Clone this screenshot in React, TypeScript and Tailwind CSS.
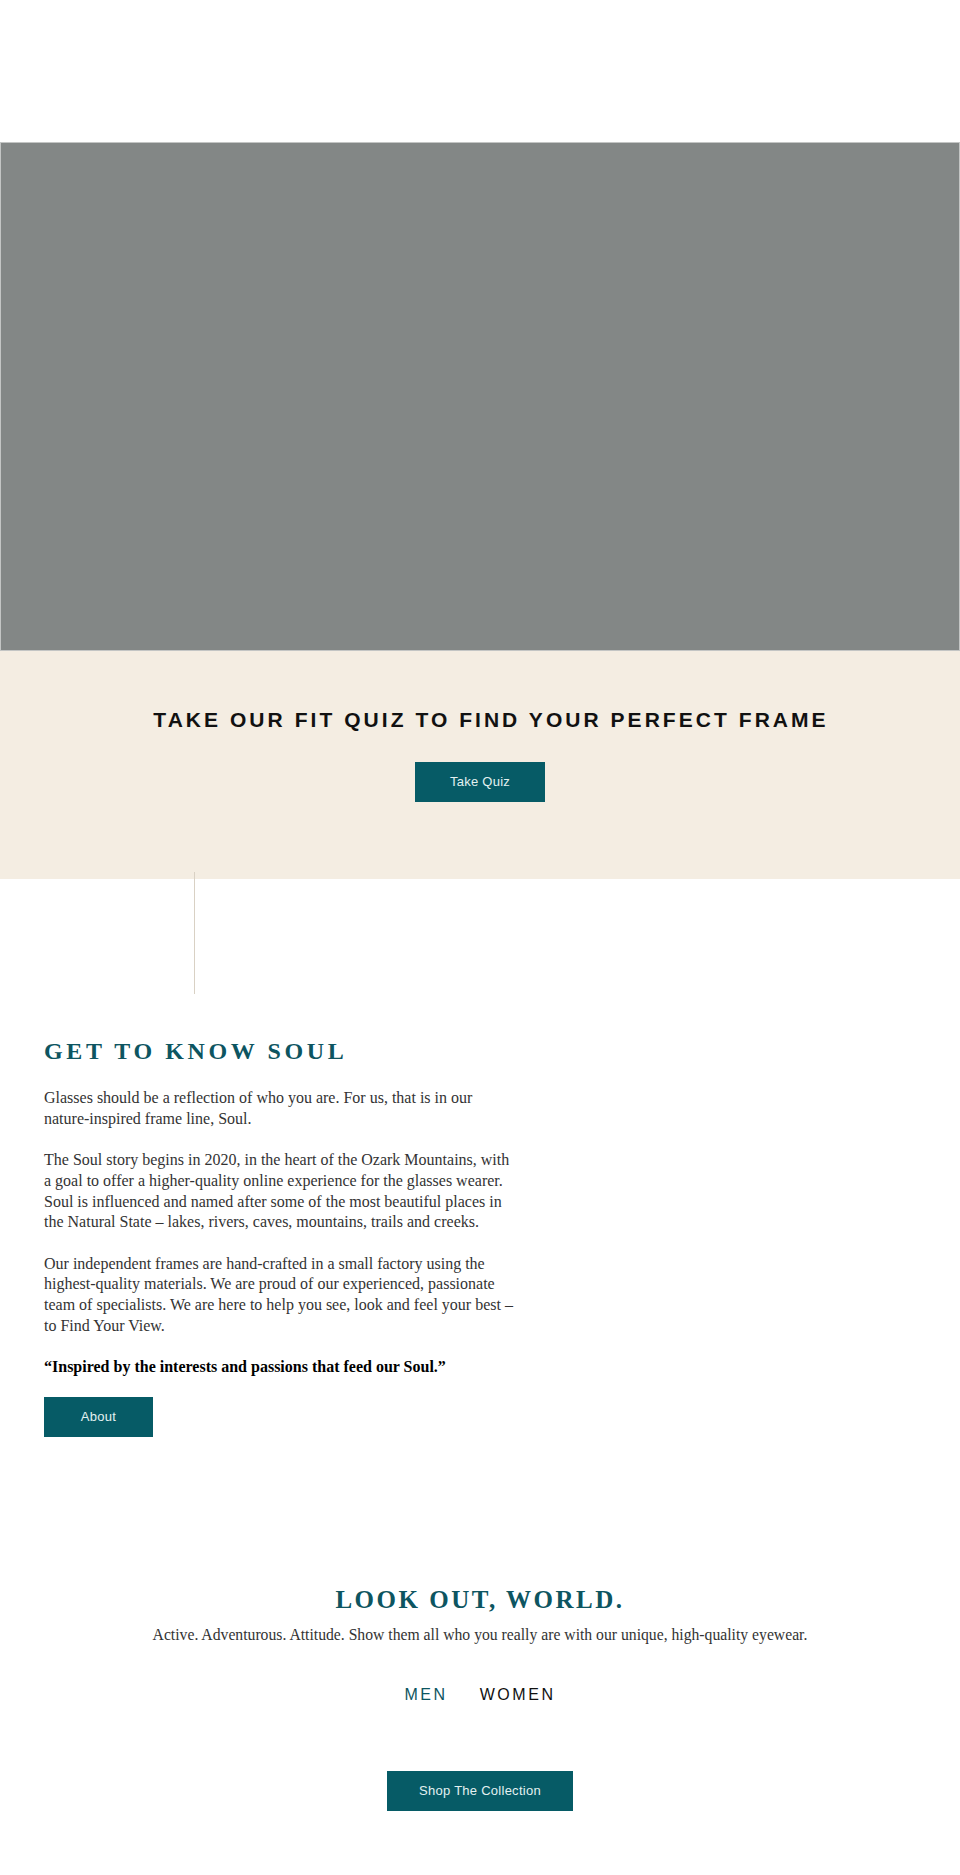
import React from 'react';

const serif = "font-['Liberation_Serif',_'Times_New_Roman',serif]";
const sans = "font-['Liberation_Sans',Arial,sans-serif]";

const TealButton: React.FC<{ label: string; width: string }> = ({ label, width }) => (
  <button
    className={`${width} h-[40px] bg-[#065b66] text-[13px] text-[#e3f1f1] ${sans} tracking-[0.02em] hover:bg-[#0a6c78]`}
  >
    {label}
  </button>
);

const paragraphs = [
  'Glasses should be a reflection of who you are. For us, that is in our nature-inspired frame line, Soul.',
  'The Soul story begins in 2020, in the heart of the Ozark Mountains, with a goal to offer a higher-quality online experience for the glasses wearer. Soul is influenced and named after some of the most beautiful places in the Natural State – lakes, rivers, caves, mountains, trails and creeks.',
  'Our independent frames are hand-crafted in a small factory using the highest-quality materials. We are proud of our experienced, passionate team of specialists. We are here to help you see, look and feel your best – to Find Your View.',
];

export default function App() {
  return (
    <div className="w-[960px] min-h-[1875px] bg-white">
      {/* header area, empty */}
      <div className="h-[142px]" />

      {/* hero media placeholder */}
      <section className="h-[509px] bg-[#838786] border border-[#c3c5c4]" />

      {/* fit quiz band */}
      <section className="h-[228px] bg-[#f4ede2] flex flex-col items-center pt-[59px]">
        <h2 className={`ml-[22px] ${sans} font-bold text-[21px] leading-[20px] tracking-[0.145em] text-[#111]`}>
          TAKE OUR FIT QUIZ TO FIND YOUR PERFECT FRAME
        </h2>
        <div className="mt-[32px]">
          <TealButton label="Take Quiz" width="w-[130px]" />
        </div>
      </section>

      {/* divider line */}
      <div className="pl-[194px]">
        <div className="w-px h-[122px] -mt-[7px] bg-[#d9d1c4]" />
      </div>

      {/* about */}
      <section className="px-[44px] pt-[42px]">
        <h2 className={`${serif} font-bold text-[24px] leading-[30px] tracking-[0.15em] text-[#0d5561]`}>
          GET TO KNOW SOUL
        </h2>
        <div className={`mt-[22px] w-[472px] ${serif} text-[16px] leading-[20.7px] text-[#333] flex flex-col gap-[20.7px]`}>
          {paragraphs.map((p) => (
            <p key={p.slice(0, 12)}>{p}</p>
          ))}
          <p className="text-[16px] font-bold text-black">
            “Inspired by the interests and passions that feed our Soul.”
          </p>
        </div>
        <div className="mt-[19px]">
          <TealButton label="About" width="w-[109px]" />
        </div>
      </section>

      {/* collection */}
      <section className="pt-[148px] pb-[60px] flex flex-col items-center">
        <h2 className={`${serif} font-bold text-[25px] leading-[30px] tracking-[0.1em] text-[#0d5561]`}>
          LOOK OUT, WORLD.
        </h2>
        <p className={`mt-[10px] ${serif} text-[15.7px] leading-[20.7px] text-[#333]`}>
          Active. Adventurous. Attitude. Show them all who you really are with our unique, high-quality eyewear.
        </p>
        <nav className={`mt-[39px] flex gap-[32px] ${sans} text-[16px] leading-[20px] tracking-[0.16em]`}>
          <a className="text-[#0d5561]">MEN</a>
          <a className="text-[#111]">WOMEN</a>
        </nav>
        <div className="mt-[66px]">
          <TealButton label="Shop The Collection" width="w-[186px]" />
        </div>
      </section>
    </div>
  );
}
